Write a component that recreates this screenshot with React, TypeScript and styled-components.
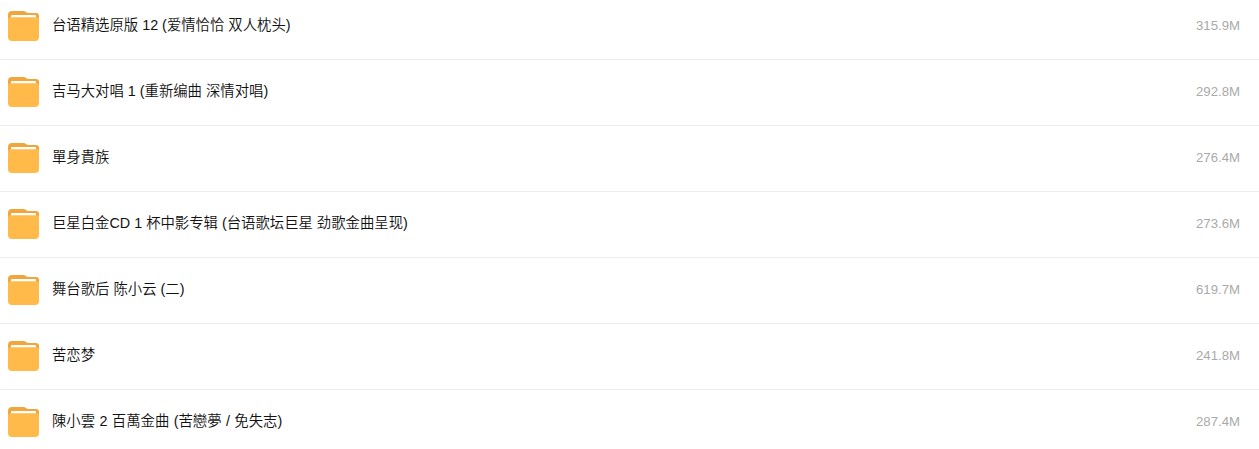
import React from 'react';
import styled, { createGlobalStyle } from 'styled-components';

const Global = createGlobalStyle`
  body { margin: 0; background: #fff; font-family: "Liberation Sans", Arial, "Noto Sans CJK SC", sans-serif; overflow: hidden; }
`;
const List = styled.ul`
  list-style: none;
  margin: 0;
  padding: 0;
  height: 449px;
  overflow: hidden;
`;
const Row = styled.li<{ $first?: boolean }>`
  display: flex;
  align-items: flex-start;
  box-sizing: border-box;
  height: ${p => (p.$first ? 60 : 66)}px;
  padding: ${p => (p.$first ? 10 : 16)}px 19px 0 7px;
  border-bottom: 1px solid #ededed;
`;
const Folder = styled.svg`
  flex: none;
  width: 33px;
  height: 32px;
`;
const Name = styled.span<{ $spacing: number }>`
  flex: 1;
  margin-left: 12px;
  font-size: 14.36px;
  font-weight: 350;
  line-height: 31px;
  word-spacing: ${p => p.$spacing}px;
  color: #111;
  white-space: nowrap;
`;
const Size = styled.span`
  font-size: 13.2px;
  line-height: 31px;
  color: #aaa;
`;

const albums: { name: string; size: string; spacing?: number }[] = [
  { name: '台语精选原版 12 (爱情恰恰 双人枕头)', size: '315.9M' },
  { name: '吉马大对唱 1 (重新编曲 深情对唱)', size: '292.8M' },
  { name: '單身貴族', size: '276.4M' },
  { name: '巨星白金CD 1 杯中影专辑 (台语歌坛巨星 劲歌金曲呈现)', size: '273.6M' },
  { name: '舞台歌后 陈小云 (二)', size: '619.7M' },
  { name: '苦恋梦', size: '241.8M' },
  { name: '陳小雲 2 百萬金曲 (苦戀夢 / 免失志)', size: '287.4M', spacing: 0.4 },
];

const FolderIcon = () => (
  <Folder viewBox="0 0 33 32">
    <path d="M1 5a4 4 0 0 1 4-4h11.500c2 0 3 2 5 2H29a3 3 0 0 1 3 3v12H1z" fill="#f0a63a" />
    <path d="M1 10a3 3 0 0 1 3-3h25a3 3 0 0 1 3 3v17a4 4 0 0 1-4 4H5a4 4 0 0 1-4-4z" fill="#ffba49" />
    <rect x="4" y="5" width="25" height="2.300" rx="0.400" fill="#fff" />
  </Folder>
);

export default function App() {
  return (
    <>
      <Global />
      <List>
        {albums.map(({ name, size, spacing = 0 }, i) => (
          <Row key={name} $first={i === 0}>
            <FolderIcon />
            <Name $spacing={spacing}>{name}</Name>
            <Size>{size}</Size>
          </Row>
        ))}
      </List>
    </>
  );
}
